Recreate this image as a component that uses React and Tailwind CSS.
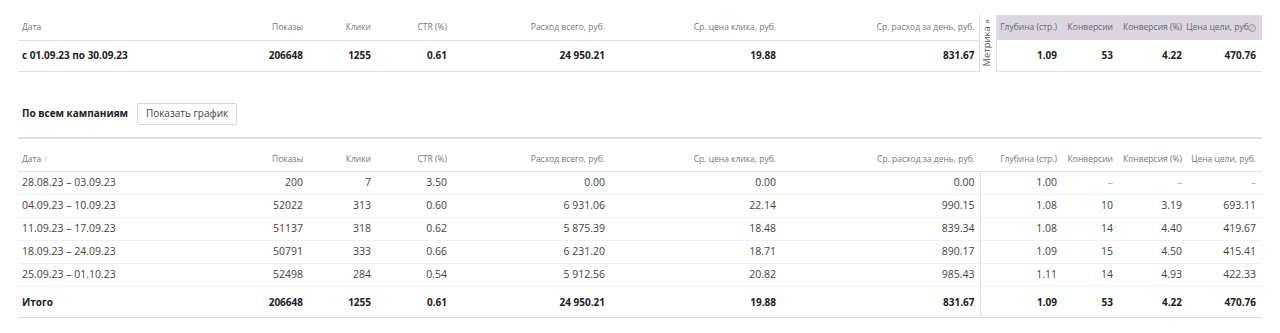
import React from 'react';

const FONT = { fontFamily: '"Open Sans", "Noto Sans", sans-serif' };

const weeks = [
  ['28.08.23 – 03.09.23', '200', '7', '3.50', '0.00', '0.00', '0.00', '1.00', '–', '–', '–'],
  ['04.09.23 – 10.09.23', '52022', '313', '0.60', '6 931.06', '22.14', '990.15', '1.08', '10', '3.19', '693.11'],
  ['11.09.23 – 17.09.23', '51137', '318', '0.62', '5 875.39', '18.48', '839.34', '1.08', '14', '4.40', '419.67'],
  ['18.09.23 – 24.09.23', '50791', '333', '0.66', '6 231.20', '18.71', '890.17', '1.09', '15', '4.50', '415.41'],
  ['25.09.23 – 01.10.23', '52498', '284', '0.54', '5 912.56', '20.82', '985.43', '1.11', '14', '4.93', '422.33'],
];

const total = ['Итого', '206648', '1255', '0.61', '24 950.21', '19.88', '831.67', '1.09', '53', '4.22', '470.76'];

const heads = ['Показы', 'Клики', 'CTR (%)', 'Расход всего, руб.', 'Ср. цена клика, руб.', 'Ср. расход за день, руб.'];
const metrikaHeads = ['Глубина (стр.)', 'Конверсии', 'Конверсия (%)', 'Цена цели, руб.'];

function isDash(v) {
  return v === '–';
}

function TopTable() {
  return (
    <table className="table-fixed border-collapse w-[1244px] ml-[18px] mt-[15px]">
      <colgroup>
        <col className="w-[222px]" />
        <col className="w-[63px]" />
        <col className="w-[68px]" />
        <col className="w-[76px]" />
        <col className="w-[158px]" />
        <col className="w-[171px]" />
        <col className="w-[203px]" />
        <col className="w-[17px]" />
        <col className="w-[61px]" />
        <col className="w-[56px]" />
        <col className="w-[69px]" />
        <col className="w-[80px]" />
      </colgroup>
      <tbody>
        <tr className="h-[25px] text-[8.5px] text-[#777]">
          <td className="p-0 text-left pl-[4px] border-b border-[#e3e3e3]">Дата</td>
          {heads.map((h, i) => (
            <td key={h} className={`p-0 text-right border-b border-[#e3e3e3] ${i === 5 ? 'pr-[4px]' : ''}`}>{h}</td>
          ))}
          <td rowSpan={2} className="p-0 align-top border-x border-[#dedede] bg-white">
            <div className="h-[56px] flex items-center justify-center overflow-hidden">
              <span className="text-[9.5px] text-[#555] whitespace-nowrap [writing-mode:vertical-rl] rotate-180">Метрика »</span>
            </div>
          </td>
          {metrikaHeads.map((h, i) => (
            <td key={h} className={`p-0 text-right bg-[#dbd6e2] text-[#666] whitespace-nowrap ${i === 3 ? 'pr-[6px]' : ''}`}>
              {h}
              {i === 3 && (
                <span className="inline-block align-middle ml-[-3px] w-[8px] h-[8px] rounded-full border border-[#999] text-[6px] leading-[6px] text-center text-[#888]">?</span>
              )}
            </td>
          ))}
        </tr>
        <tr className="h-[31px] text-[10px] font-bold text-[#222]">
          <td className="p-0 pl-[4px] border-b border-[#e3e3e3]">с 01.09.23 по 30.09.23</td>
          {total.slice(1, 7).map((v, i) => (
            <td key={i} className={`p-0 text-right border-b border-[#e3e3e3] ${i === 5 ? 'pr-[4px]' : ''}`}>{v}</td>
          ))}
          {total.slice(7).map((v, i) => (
            <td key={i} className={`p-0 text-right border-b border-[#e3e3e3] ${i === 3 ? 'pr-[6px]' : ''}`}>{v}</td>
          ))}
        </tr>
      </tbody>
    </table>
  );
}

function Row({ cells, bold }) {
  return (
    <tr className={`${bold ? 'h-[31px] text-[10px] font-bold text-[#222] border-b border-[#dcdcdc]' : 'h-[23px] text-[10.5px] text-[#444] border-b border-[#f0f0f0]'}`}>
      <td className="p-0 pl-[4px]">{cells[0]}</td>
      {cells.slice(1).map((v, i) => (
        <td
          key={i}
          className={`p-0 text-right ${i === 5 ? 'pr-[5px] border-r border-[#dedede]' : ''} ${i === 9 ? 'pr-[6px]' : ''} ${isDash(v) ? 'text-[#aaa]' : ''}`}
        >
          {v}
        </td>
      ))}
    </tr>
  );
}

function WeekTable() {
  return (
    <table className="table-fixed border-collapse w-[1244px] ml-[18px]">
      <colgroup>
        <col className="w-[222px]" />
        <col className="w-[63px]" />
        <col className="w-[68px]" />
        <col className="w-[76px]" />
        <col className="w-[158px]" />
        <col className="w-[171px]" />
        <col className="w-[204px]" />
        <col className="w-[77px]" />
        <col className="w-[56px]" />
        <col className="w-[69px]" />
        <col className="w-[80px]" />
      </colgroup>
      <thead>
        <tr className="h-[33px] text-[8.5px] text-[#777] border-b border-[#e3e3e3]">
          <th className="p-0 text-left font-normal pl-[4px] align-bottom pb-[5px]">
            Дата <span className="text-[#aaa]">↑</span>
          </th>
          {heads.map((h, i) => (
            <th key={h} className={`p-0 text-right font-normal align-bottom pb-[5px] ${i === 5 ? 'pr-[5px]' : ''}`}>{h}</th>
          ))}
          {metrikaHeads.map((h, i) => (
            <th key={h} className={`p-0 text-right font-normal align-bottom pb-[5px] whitespace-nowrap ${i === 3 ? 'pr-[6px]' : ''}`}>{h}</th>
          ))}
        </tr>
      </thead>
      <tbody>
        {weeks.map((w) => (
          <Row key={w[0]} cells={w} />
        ))}
        <Row cells={total} bold />
      </tbody>
    </table>
  );
}

export default function App() {
  return (
    <div className="w-[1280px] h-[333px] bg-white overflow-hidden" style={FONT}>
      <TopTable />
      <div className="ml-[18px] w-[1244px] mt-[31px] flex items-center gap-[9px] pl-[4px] h-[22px]">
        <span className="text-[10px] font-bold text-[#222]">По всем кампаниям</span>
        <button className="h-[22px] w-[100px] border border-[#d6d6d6] rounded-[2px] text-[10px] text-[#444] bg-white">Показать график</button>
      </div>
      <div className="ml-[18px] w-[1244px] mt-[12px] border-b-2 border-[#e0e0e0]" />
      <WeekTable />
    </div>
  );
}
